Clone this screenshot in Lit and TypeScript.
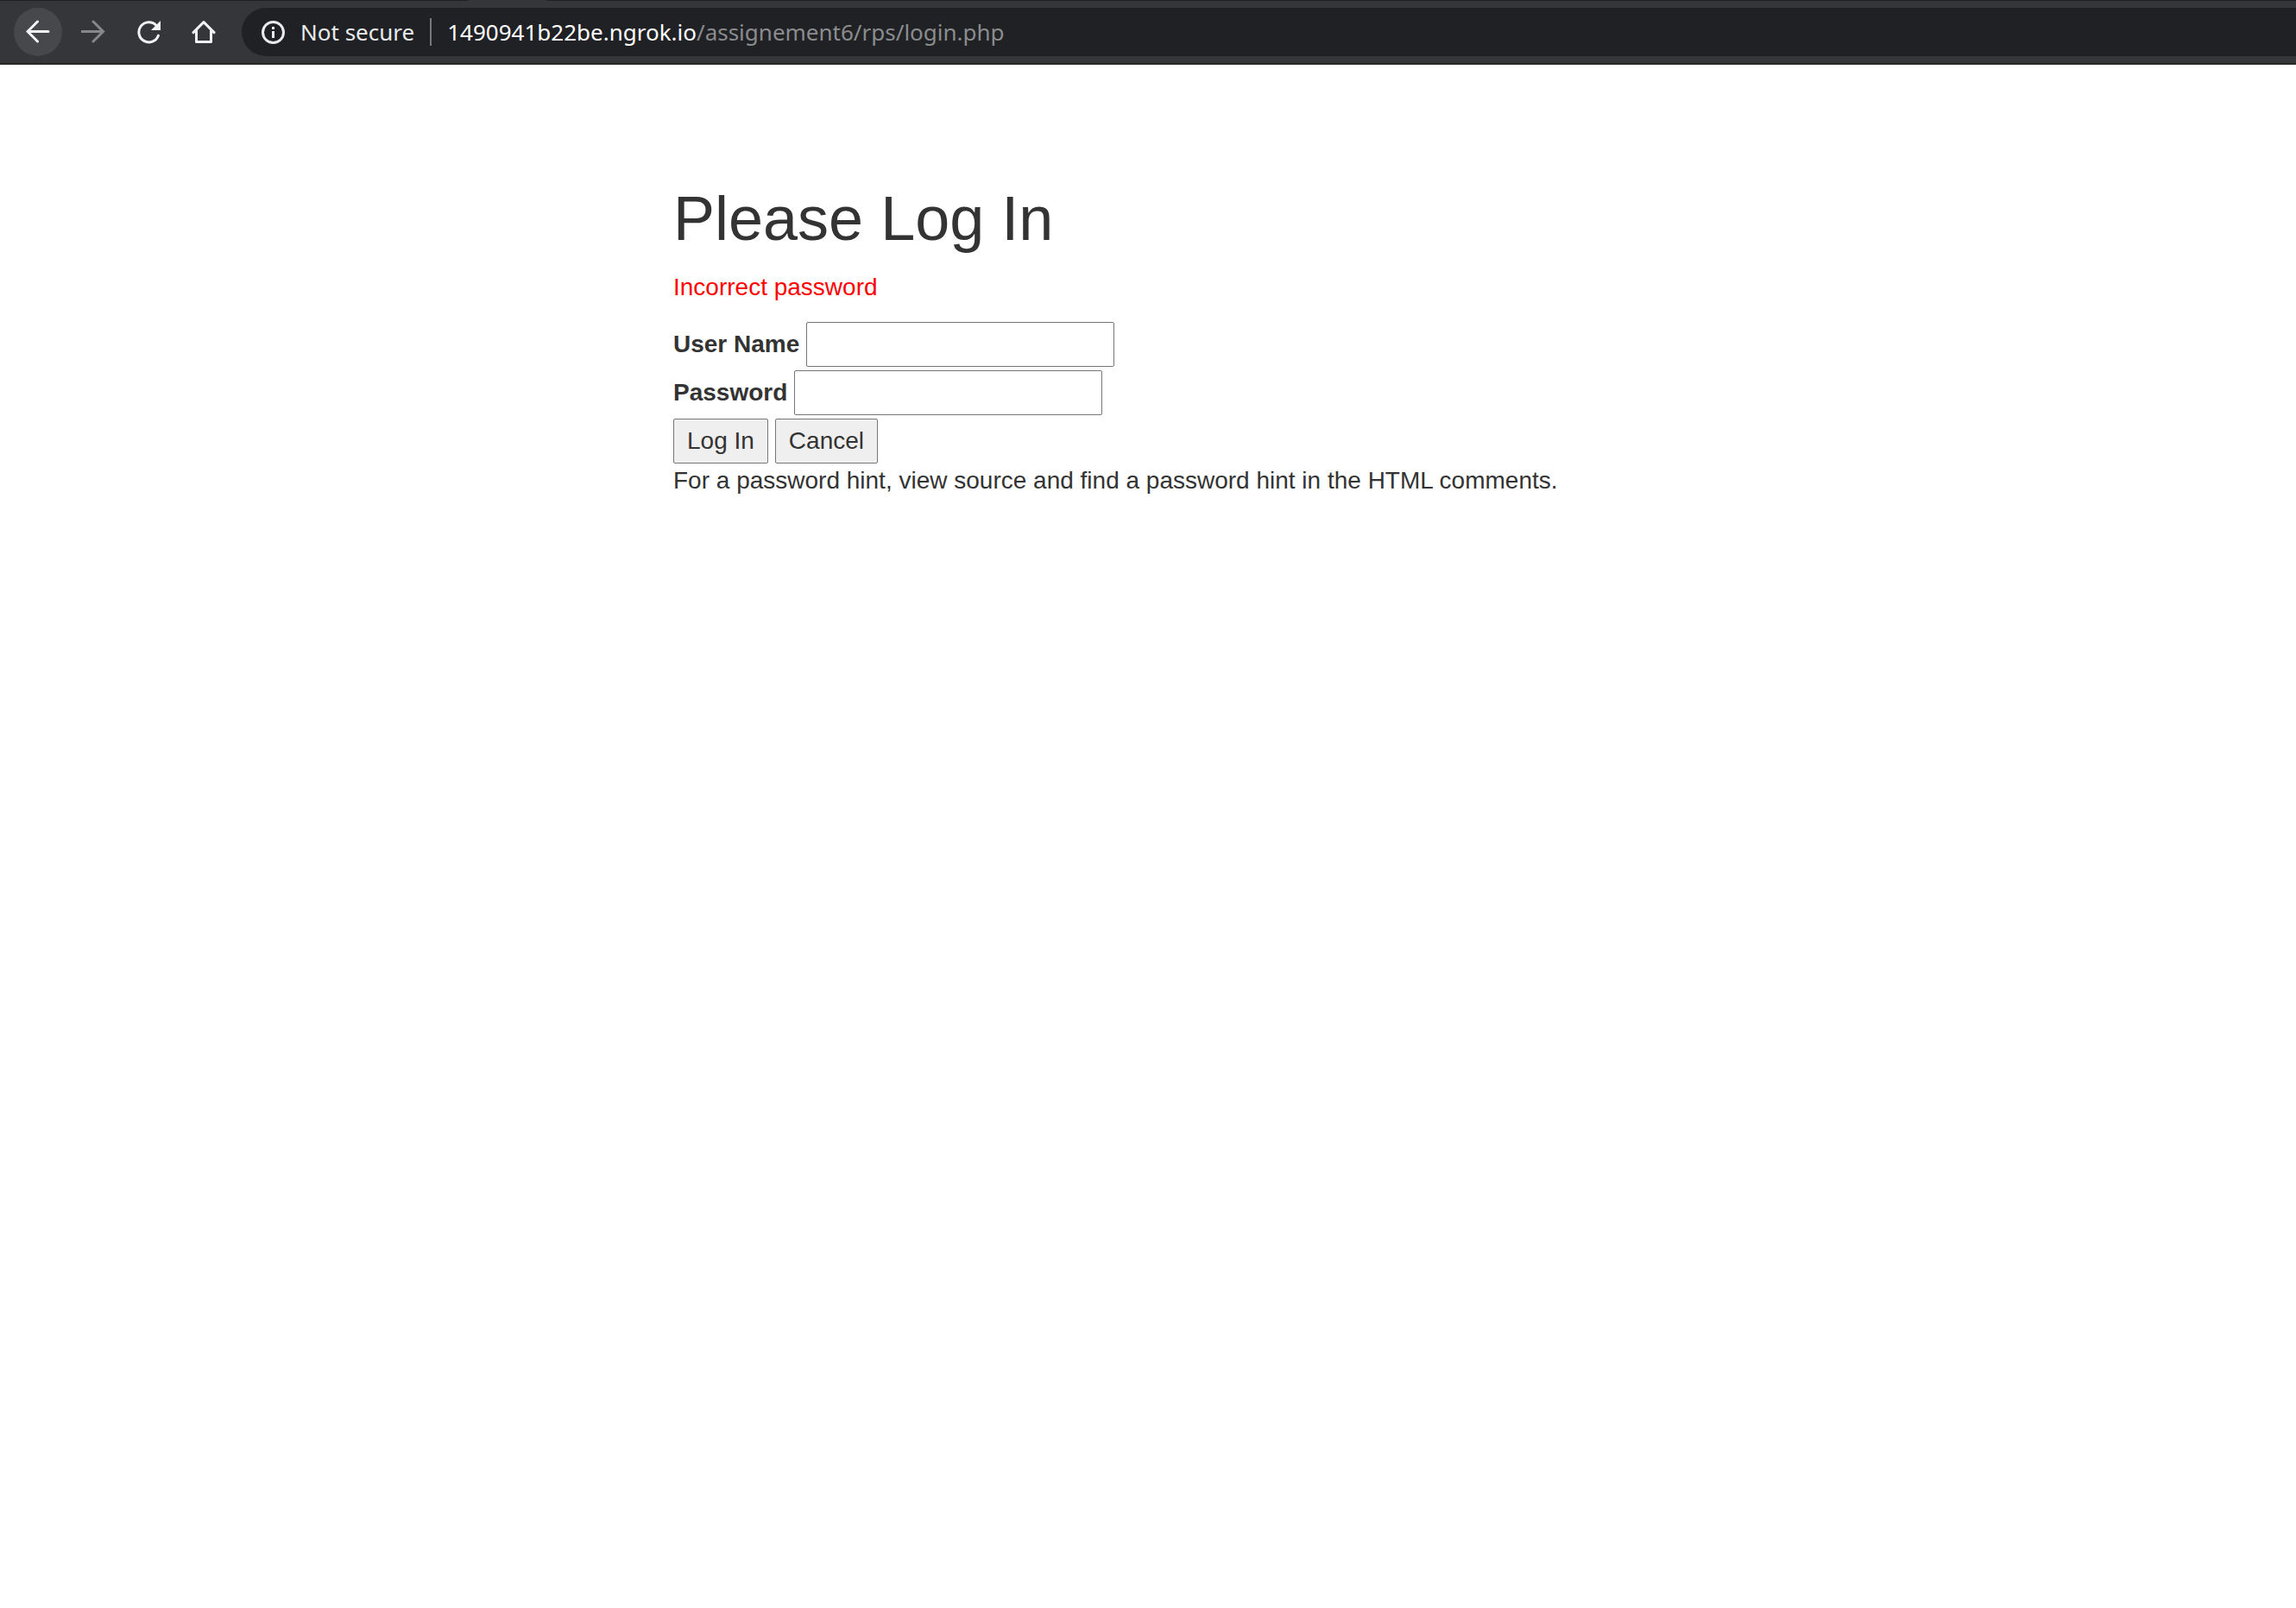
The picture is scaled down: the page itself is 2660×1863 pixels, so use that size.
import { LitElement, html, css, svg } from "lit";
import { customElement } from "lit/decorators.js";

const icons = {
  back: svg`<path d="M26 13.5H3M13.5 2L2 13.5L13.5 25" fill="none" stroke="currentColor" stroke-width="3" stroke-linecap="round"/>`,
  forward: svg`<path d="M1 13.5H25M14 2L25.5 13.5L14 25" fill="none" stroke="currentColor" stroke-width="3" stroke-linecap="round"/>`,
  reload: svg`<path d="M25.4 18.2A11.6 11.6 0 1 1 23 6.4" fill="none" stroke="currentColor" stroke-width="3" stroke-linecap="round"/><path d="M28 1V12H17Z" fill="currentColor"/>`,
  home: svg`<path d="M2 14.6L14 2.6L26 14.6M5.5 12V25.5H22.5V12" fill="none" stroke="currentColor" stroke-width="3" stroke-linecap="round" stroke-linejoin="round"/>`,
  info: svg`<circle cx="14.5" cy="14.5" r="12" fill="none" stroke="currentColor" stroke-width="3"/><path d="M13 8h3v3h-3zM13 13h3v8h-3z" fill="currentColor"/>`,
};

@customElement("browser-toolbar")
export class BrowserToolbar extends LitElement {
  static styles = css`
    :host {
      display: block;
      color: #f1f3f4;
      font: 26px/36px "Noto Sans", "Open Sans", sans-serif;
    }
    .edge {
      height: 1px;
      background: linear-gradient(to right, #202124 543px, #35363a 543px 633px, #202124 633px);
    }
    .bar {
      display: flex;
      align-items: center;
      gap: 16px;
      padding: 8px 0 8px 16px;
      background: #35363a;
      border-bottom: 2px solid #282828;
    }
    .nav {
      display: flex;
      gap: 8px;
    }
    .nav-button {
      display: grid;
      place-items: center;
      width: 56px;
      height: 56px;
      padding: 0;
      border: 0;
      border-radius: 50%;
      background: transparent;
      color: inherit;
    }
    .nav-button.active {
      background: #47484b;
    }
    .nav-button:disabled {
      color: #86878a;
    }
    .icon {
      display: block;
      width: 28px;
      height: 28px;
    }
    .omnibox {
      display: flex;
      flex: 1;
      align-items: center;
      height: 56px;
      padding-left: 22px;
      border-radius: 28px 0 0 28px;
      background: #202124;
    }
    .security {
      display: flex;
      align-items: center;
      gap: 18px;
      padding: 0 18px 0 0;
      border: 0;
      background: transparent;
      color: #e8eaed;
      font: inherit;
    }
    .divider {
      width: 2px;
      height: 32px;
      margin-right: 18px;
      background: #77787b;
    }
    .address {
      flex: 1;
      white-space: nowrap;
      outline: 0;
      color: #fff;
    }
    .path {
      color: #8b8c8e;
    }
  `;

  private icon(name: keyof typeof icons) {
    return html`<svg class="icon" viewBox="0 0 28 28" aria-hidden="true">${icons[name]}</svg>`;
  }

  render() {
    return html`
      <div class="edge"></div>
      <div class="bar">
        <nav class="nav">
          <button class="nav-button active" aria-label="Back">${this.icon("back")}</button>
          <button class="nav-button" aria-label="Forward" disabled>${this.icon("forward")}</button>
          <button class="nav-button" aria-label="Reload">${this.icon("reload")}</button>
          <button class="nav-button" aria-label="Home">${this.icon("home")}</button>
        </nav>
        <div class="omnibox">
          <button class="security">${this.icon("info")}<span>Not secure</span></button>
          <span class="divider"></span>
          <div class="address" role="textbox" aria-label="Address" contenteditable="true" spellcheck="false"><span>1490941b22be.ngrok.io</span><span class="path">/assignement6/rps/login.php</span></div>
        </div>
      </div>
    `;
  }
}

@customElement("login-page")
export class LoginPage extends LitElement {
  static styles = css`
    :host {
      display: block;
      color: #333;
      font: 28px/40px "Liberation Sans", Arial, sans-serif;
    }
    .container {
      max-width: 1100px;
      margin: 0 auto;
      padding: 138px 0 40px;
    }
    .title {
      margin: 0 0 20px;
      font-size: 72px;
      font-weight: 400;
      line-height: 80px;
    }
    .error {
      margin: 0 0 20px;
      color: #f00;
    }
    .form {
      display: flex;
      flex-direction: column;
      gap: 4px;
    }
    .row {
      display: flex;
      align-items: center;
      gap: 8px;
    }
    .label {
      font-weight: 700;
    }
    .field,
    .button {
      box-sizing: border-box;
      height: 52px;
      border: 1px solid #767676;
      border-radius: 2px;
      color: inherit;
      font: inherit;
    }
    .field {
      width: 357px;
      max-width: 100%;
      padding: 4px;
      background: #fff;
    }
    .button {
      padding: 4px 15px;
      background: #efefef;
    }
    .hint {
      margin: 0;
    }
  `;

  render() {
    return html`
      <main class="container">
        <h1 class="title">Please Log In</h1>
        <p class="error">Incorrect password</p>
        <form class="form" @submit=${(e: Event) => e.preventDefault()}>
          <div class="row">
            <label class="label" for="name">User Name</label>
            <input class="field" id="name" type="text" name="who" />
          </div>
          <div class="row">
            <label class="label" for="pass">Password</label>
            <input class="field" id="pass" type="password" name="pass" />
          </div>
          <div class="row">
            <button class="button" type="submit">Log In</button>
            <button class="button" type="button">Cancel</button>
          </div>
        </form>
        <p class="hint">For a password hint, view source and find a password hint in the HTML comments.</p>
      </main>
    `;
  }
}

@customElement("app-root")
export class AppRoot extends LitElement {
  static styles = css`
    :host {
      display: block;
      min-height: 100vh;
      background: #fff;
    }
  `;

  render() {
    return html`<browser-toolbar></browser-toolbar><login-page></login-page>`;
  }
}
